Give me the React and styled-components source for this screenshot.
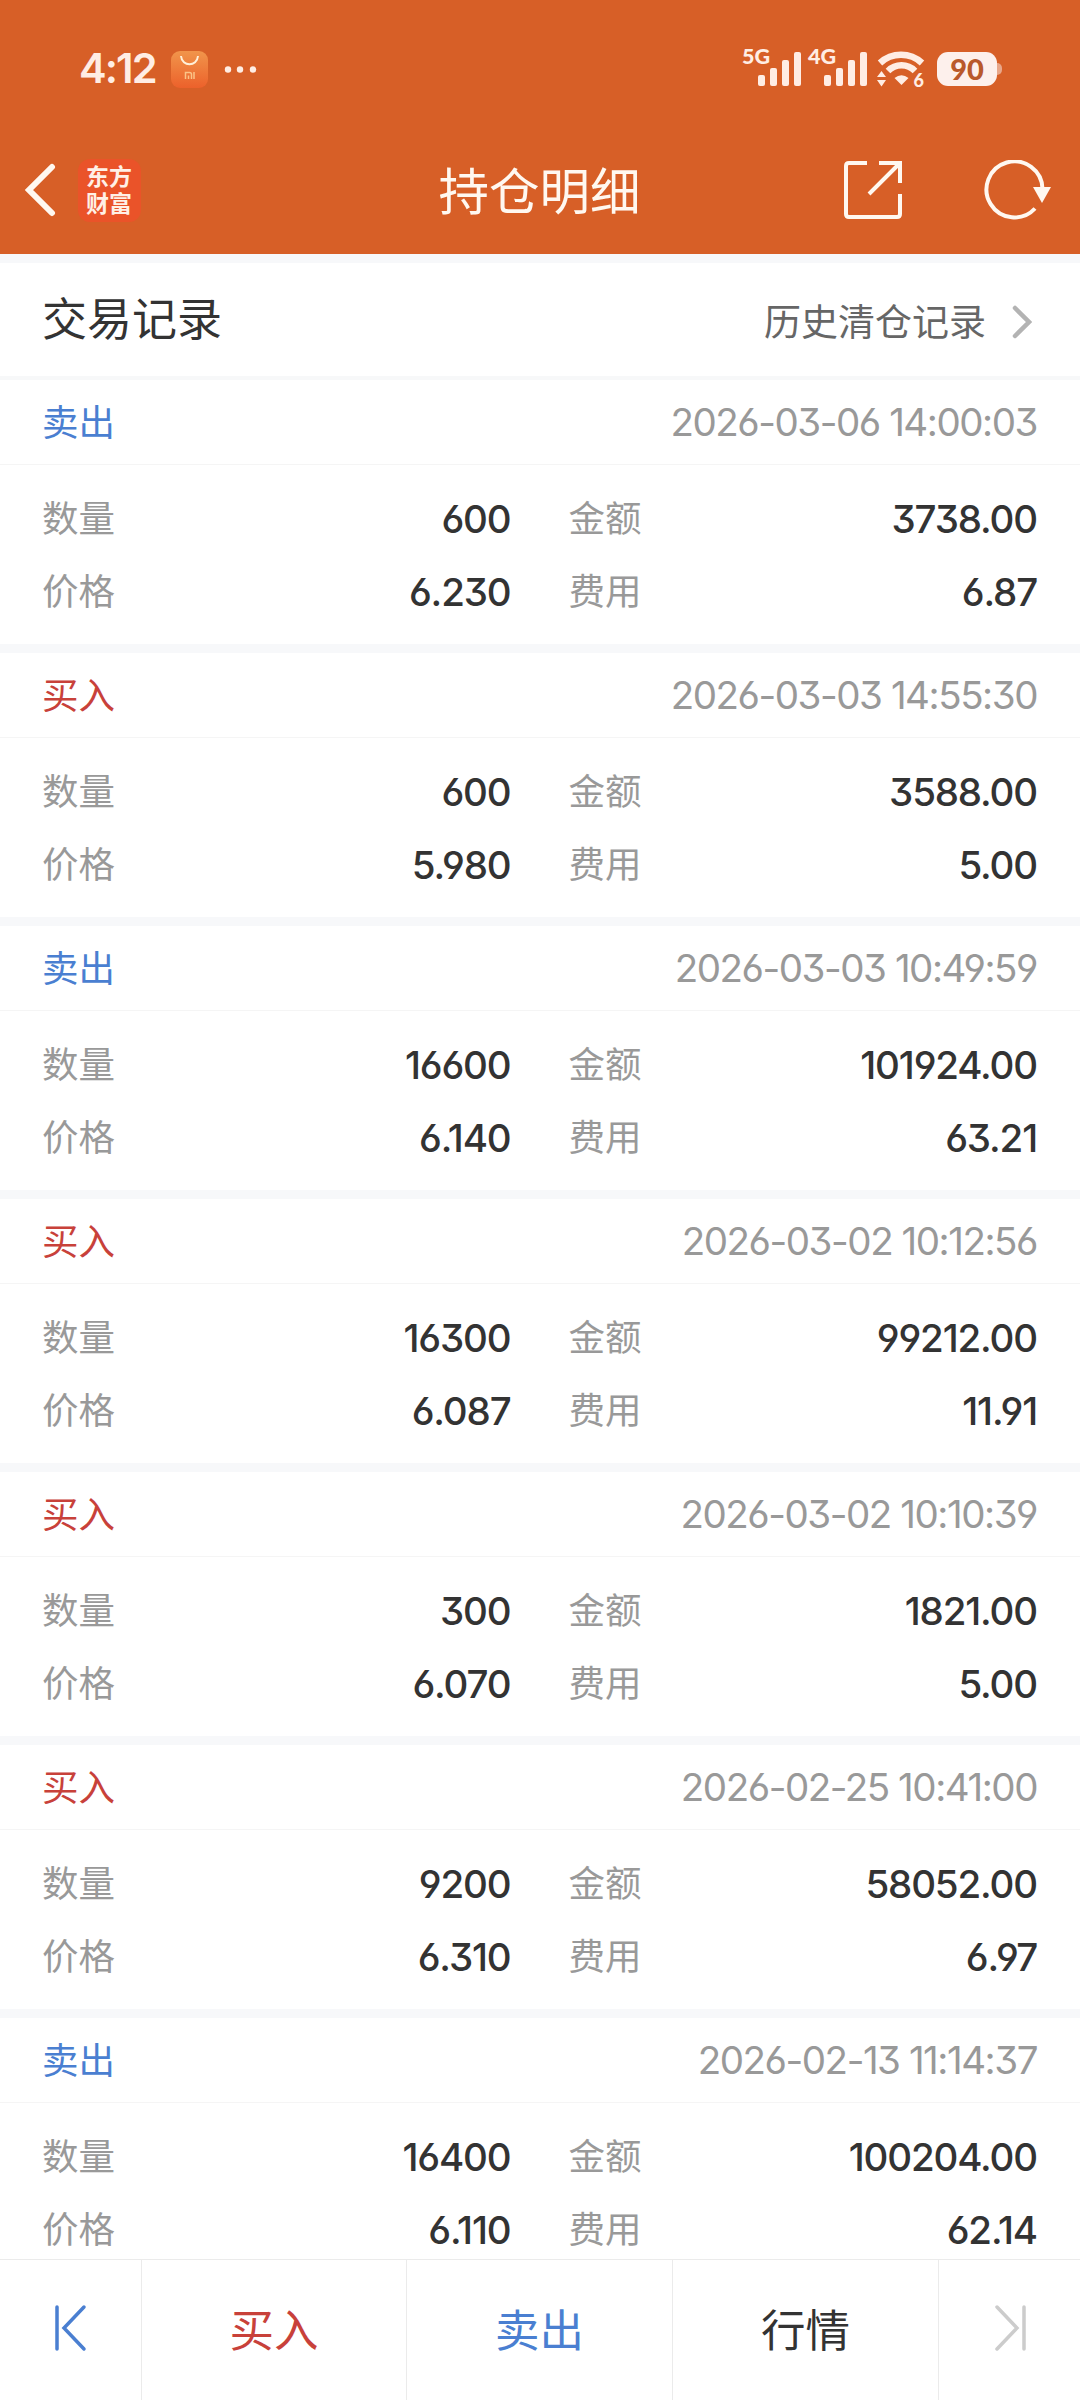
import React from 'react';
import styled, { createGlobalStyle } from 'styled-components';

const GlobalStyle = createGlobalStyle`
  * {
    box-sizing: border-box;
  }
  body {
    margin: 0;
    background: #fff;
    font-family: 'Noto Sans CJK SC', sans-serif;
    color: #333;
  }
`;

const colors = {
  brand: '#d75f27',
  status: '#ffede4',
  sell: '#4a7fd1',
  buy: '#c8413a',
  text: '#333',
  sub: '#666',
  muted: '#999',
  band: '#f7f8fa',
};

const Page = styled.div`
  display: flex;
  flex-direction: column;
  width: 1080px;
  height: 2400px;
  overflow: hidden;
`;

const Header = styled.header`
  flex: none;
  height: 254px;
  background: ${colors.brand};
`;

const StatusBar = styled.div`
  display: flex;
  align-items: center;
  height: 138px;
  padding: 0 78px 0 79px;
`;

const Clock = styled.span`
  width: 92px;
  font: 600 41.5px/1 Inter, sans-serif;
  letter-spacing: -1.9px;
  color: ${colors.status};
`;

const StatusIcons = styled.div`
  display: flex;
  align-items: center;
  margin-left: auto;
`;

const Signal = styled.svg`
  display: block;
  width: 60px;
  height: 40px;
  margin-right: 6px;
  overflow: visible;
  fill: ${colors.status};
  font: 900 21.5px Lato, sans-serif;
`;

const Wifi = styled.svg`
  display: block;
  width: 48px;
  height: 40px;
  margin: 0 12px 0 3px;
  overflow: visible;
  fill: none;
  stroke: ${colors.status};
  font: 900 18px Lato, sans-serif;
`;

const Battery = styled.div`
  position: relative;
  width: 60px;
  height: 34px;
  margin-right: 5px;
  border-radius: 11px;
  background: #fdf0ec;
  color: #b9592b;
  font: 900 29px/34px Lato, sans-serif;
  text-align: center;

  &::after {
    content: '';
    position: absolute;
    left: 60px;
    top: 11px;
    width: 5px;
    height: 12px;
    border-radius: 0 5px 5px 0;
    background: #e8a78a;
  }
`;

const NavBar = styled.nav`
  display: grid;
  grid-template-columns: 1fr auto 1fr;
  align-items: center;
  height: 104px;
  padding: 0 28px 0 24px;
`;

const NavSide = styled.div`
  display: flex;
  align-items: center;
  gap: ${({ $gap }) => $gap}px;
  justify-content: ${({ $end }) => ($end ? 'flex-end' : 'flex-start')};
`;

const NavTitle = styled.h1`
  margin: 0;
  padding: 0 0 5px 3px;
  font-size: 50.5px;
  font-weight: 400;
  line-height: 60px;
  color: #fff8f0;
`;

const Logo = styled.div`
  width: 63px;
  height: 63px;
  padding: 3px 8px 0;
  border-radius: 12px;
  background: #ea5329;
  color: #fff0e6;
  font-size: 23px;
  font-weight: 700;
  line-height: 27px;
  word-break: break-all;
`;

const Icon = styled.svg`
  display: block;
  flex: none;
  fill: none;
  stroke: ${({ $color }) => $color || '#fff8f0'};
  stroke-width: ${({ $weight }) => $weight || 4};
`;

const SectionBar = styled.div`
  display: flex;
  flex: none;
  align-items: center;
  justify-content: space-between;
  height: 126px;
  padding: 0 48px 0 42px;
  border-top: 9px solid ${colors.band};
  border-bottom: 4px solid #f7f8f9;
`;

const SectionTitle = styled.h2`
  margin: 0;
  padding-bottom: 5px;
  font-size: 45px;
  font-weight: 400;
  line-height: 60px;
`;

const HistoryLink = styled.a`
  display: flex;
  align-items: center;
  gap: 26px;
  padding-top: 4px;
  font-size: 37px;
  line-height: 50px;
  color: ${colors.sub};
`;

const HistoryText = styled.span`
  padding-bottom: 4px;
`;

const List = styled.main`
  flex: 1;
  min-height: 0;
  overflow: hidden;
`;

const Record = styled.section`
  height: 273px;
  border-bottom: 9px solid ${colors.band};
`;

const RecordHead = styled.div`
  display: flex;
  align-items: center;
  justify-content: space-between;
  height: 85px;
  padding: 0 43px 0 42px;
  border-bottom: 1px solid #f5f5f5;
`;

const Side = styled.span`
  padding-bottom: 3px;
  font-size: 36.5px;
  line-height: 50px;
  color: ${({ $side }) => colors[$side]};
`;

const Num = styled.span`
  font-family: Inter, sans-serif;
  font-size: 38.5px;
  font-weight: ${({ $muted }) => ($muted ? 400 : 450)};
  font-feature-settings: 'cv03', 'cv04', 'cv09';
  letter-spacing: ${({ $muted }) => ($muted ? '-1.45px' : '-1.15px')};
  line-height: 50px;
  color: ${({ $muted }) => ($muted ? colors.muted : colors.text)};
`;

const Fields = styled.div`
  display: grid;
  grid-template-columns: 1fr 1fr;
  grid-auto-rows: 73px;
  column-gap: 58px;
  padding: 17px 43px 0 42px;
`;

const FieldRow = styled.div`
  display: flex;
  align-items: center;
  justify-content: space-between;
`;

const Label = styled.span`
  padding-bottom: 3px;
  font-size: 36.5px;
  line-height: 50px;
  color: ${colors.muted};
`;

const TabBar = styled.footer`
  display: grid;
  flex: none;
  grid-template-columns: 142px 265px 266px 266px 141px;
  height: 141px;
  border-top: 1px solid #ebebeb;
`;

const Tab = styled.div`
  display: flex;
  align-items: center;
  justify-content: center;
  padding-bottom: 4px;
  border-right: 1px solid #ebebeb;
  font-size: 44.5px;
  line-height: 60px;
  color: ${({ $tone }) => colors[$tone]};

  &:last-child {
    border-right: 0;
  }
`;

const names = { sell: '卖出', buy: '买入' };

const records = [
  ['sell', '2026-03-06 14:00:03', '600', '3738.00', '6.230', '6.87'],
  ['buy', '2026-03-03 14:55:30', '600', '3588.00', '5.980', '5.00'],
  ['sell', '2026-03-03 10:49:59', '16600', '101924.00', '6.140', '63.21'],
  ['buy', '2026-03-02 10:12:56', '16300', '99212.00', '6.087', '11.91'],
  ['buy', '2026-03-02 10:10:39', '300', '1821.00', '6.070', '5.00'],
  ['buy', '2026-02-25 10:41:00', '9200', '58052.00', '6.310', '6.97'],
  ['sell', '2026-02-13 11:14:37', '16400', '100204.00', '6.110', '62.14'],
];

const SignalIcon = ({ label }) => (
  <Signal viewBox="0 0 60 40">
    <text x="0" y="15" textLength="28">
      {label}
    </text>
    <rect x="16" y="26" width="7" height="11" rx="2" />
    <rect x="28" y="19" width="7" height="18" rx="2" />
    <rect x="40" y="11" width="7" height="26" rx="2" />
    <rect x="52" y="3" width="7" height="34" rx="2" />
  </Signal>
);

const WifiIcon = () => (
  <Wifi viewBox="0 0 48 40">
    <path d="M3 14a31 31 0 0 1 42 0" strokeWidth="6.5" />
    <path d="M11 22a19 19 0 0 1 27 0" strokeWidth="6.5" />
    <g fill={colors.status} stroke="none">
      <path d="M17.500 29q7-5.500 14 0l-7 7z" />
      <path d="M0 28l4.500-6 4.500 6zM0 31l4.500 6.500 4.500-6.500z" />
      <text x="36.500" y="38">
        6
      </text>
    </g>
  </Wifi>
);

const StoreIcon = () => (
  <Icon width="90" height="37" viewBox="0 0 90 37" $weight={2}>
    <defs>
      <linearGradient id="store" x1="0" y1="0" x2="0" y2="1">
        <stop offset="0" stopColor="#f1954b" />
        <stop offset="1" stopColor="#ec612b" />
      </linearGradient>
    </defs>
    <rect width="37" height="37" rx="9" fill="url(#store)" stroke="none" />
    <path d="M10 5c1 11 16 11 17 0" stroke="#fff0d8" />
    <path
      d="M14.500 28v-6.500h4q2 0 2 2v4.500M17.500 24.500v3.500M23 21v7"
      stroke="#fbc487"
      strokeWidth="1.500"
    />
    <g fill={colors.status} stroke="none">
      <circle cx="57" cy="18.500" r="3.200" />
      <circle cx="69" cy="18.500" r="3.200" />
      <circle cx="82" cy="18.500" r="3.200" />
    </g>
  </Icon>
);

const Field = ({ label, value }) => (
  <FieldRow>
    <Label>{label}</Label>
    <Num>{value}</Num>
  </FieldRow>
);

const App = () => (
  <>
    <GlobalStyle />
    <Page>
      <Header>
        <StatusBar>
          <Clock>4:12</Clock>
          <StoreIcon />
          <StatusIcons>
            <SignalIcon label="5G" />
            <SignalIcon label="4G" />
            <WifiIcon />
            <Battery>90</Battery>
          </StatusIcons>
        </StatusBar>
        <NavBar>
          <NavSide $gap={22}>
            <Icon width="32" height="54" viewBox="0 0 32 54" $weight={6}>
              <path d="M28 4L5 27l23 23" strokeLinecap="round" />
            </Icon>
            <Logo>东方财富</Logo>
          </NavSide>
          <NavTitle>持仓明细</NavTitle>
          <NavSide $end $gap={81}>
            <Icon width="60" height="60" viewBox="0 0 60 60">
              <path d="M24 3H6Q3 3 3 6v48q0 3 3 3h48q3 0 3-3V34" />
              <path d="M36 3h21v20M57 3L26 34" />
            </Icon>
            <Icon width="68" height="60" viewBox="0 0 68 60">
              <path d="M58.500 29A28 28 0 1 0 51 48.500" />
              <path d="M49 27h18l-9 16z" fill="#fff8f0" stroke="none" />
            </Icon>
          </NavSide>
        </NavBar>
      </Header>
      <SectionBar>
        <SectionTitle>交易记录</SectionTitle>
        <HistoryLink>
          <HistoryText>历史清仓记录</HistoryText>
          <Icon
            width="20"
            height="34"
            viewBox="0 0 20 34"
            $color="#b3b3b3"
            $weight={4.5}
          >
            <path d="M3 3l14 14L3 31" strokeLinecap="round" />
          </Icon>
        </HistoryLink>
      </SectionBar>
      <List>
        {records.map(([side, time, amount, total, price, fee]) => (
          <Record key={time}>
            <RecordHead>
              <Side $side={side}>{names[side]}</Side>
              <Num $muted>{time}</Num>
            </RecordHead>
            <Fields>
              <Field label="数量" value={amount} />
              <Field label="金额" value={total} />
              <Field label="价格" value={price} />
              <Field label="费用" value={fee} />
            </Fields>
          </Record>
        ))}
      </List>
      <TabBar>
        <Tab>
          <Icon
            width="36"
            height="48"
            viewBox="0 0 36 48"
            $color={colors.sell}
            $weight={3.5}
          >
            <path d="M4 3v42M31 3L11 24l20 21" strokeLinecap="round" />
          </Icon>
        </Tab>
        <Tab $tone="buy">买入</Tab>
        <Tab $tone="sell">卖出</Tab>
        <Tab $tone="text">行情</Tab>
        <Tab>
          <Icon
            width="36"
            height="48"
            viewBox="0 0 36 48"
            $color="#ccc"
            $weight={3.5}
          >
            <path d="M32 3v42M5 3l20 21L5 45" strokeLinecap="round" />
          </Icon>
        </Tab>
      </TabBar>
    </Page>
  </>
);

export default App;
